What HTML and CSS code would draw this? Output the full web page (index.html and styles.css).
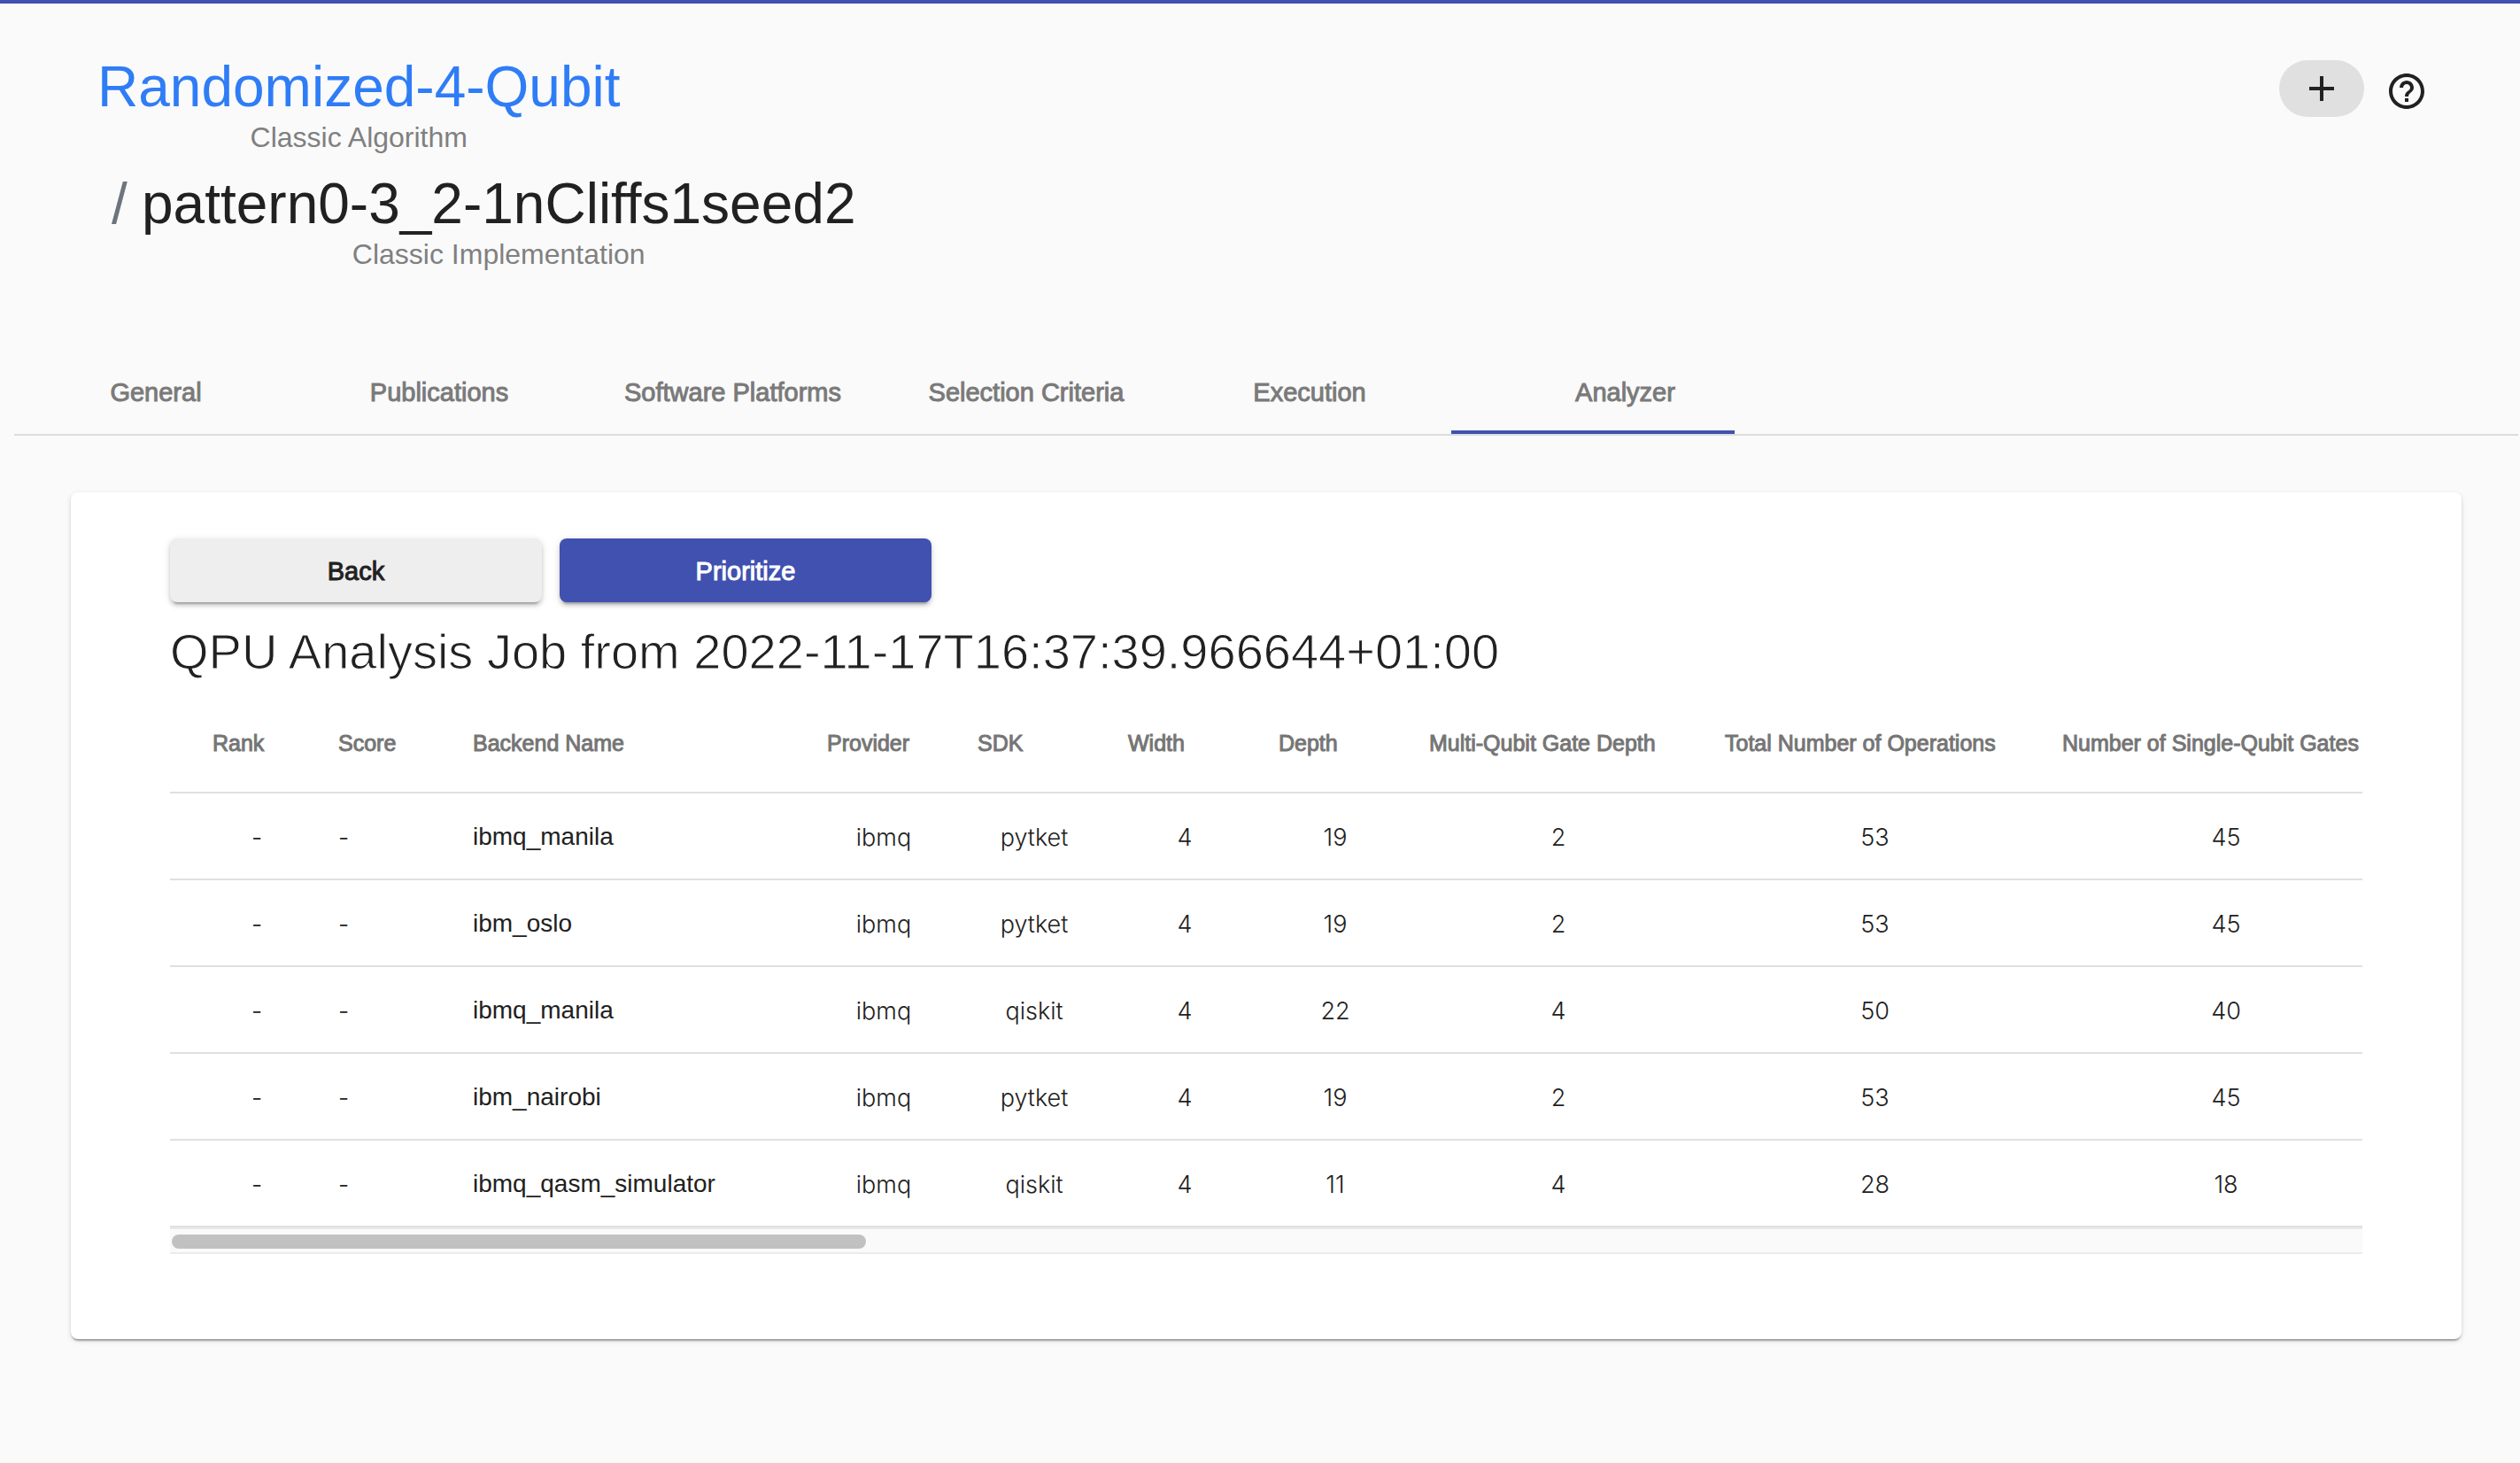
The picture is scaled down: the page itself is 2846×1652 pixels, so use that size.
FILE: index.html
```html
<!DOCTYPE html>
<html lang="en">
<head>
<meta charset="utf-8">
<title>pattern0-3_2-1nCliffs1seed2</title>
<link rel="stylesheet" href="styles.css">
</head>
<body>
<header class="page-header">
  <ol class="breadcrumb">
    <li class="crumb">
      <div class="crumb-body">
        <a class="crumb-title crumb-link" href="#">Randomized-4-Qubit</a>
        <span class="crumb-type">Classic Algorithm</span>
      </div>
    </li>
    <li class="crumb">
      <span class="crumb-separator">/</span>
      <div class="crumb-body">
        <span class="crumb-title">pattern0-3_2-1nCliffs1seed2</span>
        <span class="crumb-type">Classic Implementation</span>
      </div>
    </li>
  </ol>
  <div class="header-actions">
    <button class="add-button" type="button" aria-label="Add">
      <svg class="icon" viewBox="0 0 24 24"><path d="M19 13h-6v6h-2v-6H5v-2h6V5h2v6h6v2z"/></svg>
    </button>
    <button class="help-button" type="button" aria-label="Help">
      <svg class="icon" viewBox="0 0 24 24"><path d="M11 18h2v-2h-2v2zm1-16C6.48 2 2 6.480 2 12s4.480 10 10 10 10-4.480 10-10S17.520 2 12 2zm0 18c-4.410 0-8-3.590-8-8s3.590-8 8-8 8 3.590 8 8-3.590 8-8 8zm0-14c-2.210 0-4 1.790-4 4h2c0-1.100.9-2 2-2s2 .9 2 2c0 2-3 1.750-3 5h2c0-2.250 3-2.500 3-5 0-2.210-1.790-4-4-4z"/></svg>
    </button>
  </div>
</header>

<nav class="tabs">
  <a class="tab" href="#">General</a>
  <a class="tab" href="#">Publications</a>
  <a class="tab" href="#">Software Platforms</a>
  <a class="tab" href="#">Selection Criteria</a>
  <a class="tab" href="#">Execution</a>
  <a class="tab tab-active" href="#" aria-current="page">Analyzer</a>
</nav>

<main class="card">
  <div class="card-actions">
    <button class="button" type="button">Back</button>
    <button class="button button-primary" type="button">Prioritize</button>
  </div>
  <h1 class="card-title">QPU Analysis Job from 2022-11-17T16:37:39.966644+01:00</h1>
  <div class="table-scroll">
    <table class="results">
      <colgroup>
        <col class="col-rank"><col class="col-score"><col class="col-backend">
        <col class="col-short" span="4">
        <col class="col-multi"><col class="col-total"><col class="col-single">
      </colgroup>
      <thead>
        <tr><th>Rank</th><th>Score</th><th>Backend Name</th><th>Provider</th><th>SDK</th><th>Width</th><th>Depth</th><th>Multi-Qubit Gate Depth</th><th>Total Number of Operations</th><th>Number of Single-Qubit Gates</th></tr>
      </thead>
      <tbody>
        <tr><td>-</td><td class="score">-</td><td class="backend">ibmq_manila</td><td>ibmq</td><td>pytket</td><td>4</td><td>19</td><td>2</td><td>53</td><td>45</td></tr>
        <tr><td>-</td><td class="score">-</td><td class="backend">ibm_oslo</td><td>ibmq</td><td>pytket</td><td>4</td><td>19</td><td>2</td><td>53</td><td>45</td></tr>
        <tr><td>-</td><td class="score">-</td><td class="backend">ibmq_manila</td><td>ibmq</td><td>qiskit</td><td>4</td><td>22</td><td>4</td><td>50</td><td>40</td></tr>
        <tr><td>-</td><td class="score">-</td><td class="backend">ibm_nairobi</td><td>ibmq</td><td>pytket</td><td>4</td><td>19</td><td>2</td><td>53</td><td>45</td></tr>
        <tr><td>-</td><td class="score">-</td><td class="backend">ibmq_qasm_simulator</td><td>ibmq</td><td>qiskit</td><td>4</td><td>11</td><td>4</td><td>28</td><td>18</td></tr>
      </tbody>
    </table>
  </div>
  <div class="scroll-track"><div class="scroll-thumb"></div></div>
</main>
</body>
</html>
```

FILE: styles.css
```css
* {
  box-sizing: border-box;
}

body {
  min-height: 100vh;
  margin: 0;
  border-top: 4px solid #4051b0;
  background: #fafafa;
  color: #212121;
  font-family: "Liberation Sans", Arial, sans-serif;
  font-size: 28px;
}

/* Header */
.page-header {
  display: flex;
  justify-content: space-between;
  align-items: flex-start;
  padding: 56px 104px 0 110px;
}

.breadcrumb {
  margin: 0;
  padding: 0;
  list-style: none;
}

.crumb {
  display: flex;
}

.crumb-separator {
  width: 50px;
  padding-left: 16px;
  color: #6c757d;
  font-size: 64px;
  line-height: 76px;
}

.crumb-body {
  display: flex;
  flex-direction: column;
  align-items: center;
  height: 132px;
}

.crumb-title {
  font-size: 64px;
  line-height: 76px;
}

.crumb-link {
  color: #2f7df6;
  text-decoration: none;
}

.crumb-type {
  color: #808080;
  font-size: 32px;
  line-height: 38px;
}

.header-actions {
  display: flex;
  align-items: center;
  gap: 24px;
  padding-top: 8px;
}

.add-button,
.help-button {
  display: flex;
  justify-content: center;
  align-items: center;
  padding: 0;
  border: 0;
  background: none;
  color: inherit;
}

.add-button {
  width: 96px;
  height: 64px;
  border-radius: 32px;
  background: #e0e0e0;
}

.help-button {
  padding-top: 6px;
}

.icon {
  width: 48px;
  height: 48px;
  fill: currentColor;
}

/* Tabs */
.tabs {
  display: flex;
  margin: 70px 2px 0 16px;
  border-bottom: 2px solid #dcdcdc;
}

.tab {
  display: flex;
  justify-content: center;
  align-items: center;
  min-width: 320px;
  height: 96px;
  padding: 6px 49px 0;
  border-bottom: 4px solid transparent;
  color: #7a7a7a;
  font-size: 29px;
  text-decoration: none;
  -webkit-text-stroke: 1px;
}

.tab-active {
  padding-left: 122px;
  border-bottom-color: #4051b0;
}

/* Card */
.card {
  margin: 64px 66px 0 80px;
  padding: 52px 112px 96px;
  border-radius: 8px;
  background: #fff;
  box-shadow: 0 4px 2px -2px rgba(0, 0, 0, 0.2), 0 2px 2px rgba(0, 0, 0, 0.14), 0 2px 6px rgba(0, 0, 0, 0.12);
}

.card-actions {
  display: flex;
  gap: 20px;
}

.button {
  width: 420px;
  height: 72px;
  padding: 2px 0 0;
  border: 0;
  border-radius: 8px;
  background: #eee;
  box-shadow: 0 6px 2px -4px rgba(0, 0, 0, 0.2), 0 4px 4px rgba(0, 0, 0, 0.14), 0 2px 10px rgba(0, 0, 0, 0.12);
  color: #212121;
  font-family: inherit;
  font-size: 29px;
  -webkit-text-stroke: 1px;
}

.button-primary {
  background: #4051b0;
  color: #fff;
}

/* The outline in the card colour thins the strokes to a light weight */
.card-title {
  margin: 24px 0 16px;
  font-size: 56px;
  font-weight: 400;
  line-height: 64px;
  -webkit-text-stroke: 1px #fff;
}

/* Results table */
.table-scroll {
  overflow-x: auto;
  scrollbar-width: none;
}

.results {
  width: 2549px;
  border-collapse: separate;
  border-spacing: 0;
  table-layout: fixed;
}

.col-rank { width: 190px; }
.col-score { width: 152px; }
.col-backend { width: 400px; }
.col-short { width: 170px; }
.col-multi { width: 334px; }
.col-total { width: 381px; }
.col-single { width: 412px; }

.results th,
.results td {
  padding: 0 42px 0 0;
  border-bottom: 2px solid #e0e0e0;
  white-space: nowrap;
}

.results th {
  height: 112px;
  color: #757575;
  font-size: 25px;
  font-weight: 400;
  text-align: left;
  -webkit-text-stroke: 1px;
}

.results td {
  height: 98px;
  padding-top: 2px;
  font-family: Inter, "Liberation Sans", sans-serif;
  font-size: 27px;
  font-weight: 300;
  text-align: center;
}

.results th:first-child,
.results td:first-child {
  padding-left: 48px;
}

.results .score {
  text-align: left;
}

.results .backend {
  font-family: "Liberation Sans", Arial, sans-serif;
  font-size: 28px;
  font-weight: 400;
  text-align: left;
}

.scroll-track {
  height: 30px;
  padding: 6px 2px;
  border-top: 2px solid #e8e8e8;
  border-bottom: 2px solid #ebebeb;
  background: #fafafa;
}

.scroll-thumb {
  width: 784px;
  max-width: 32%;
  height: 16px;
  border-radius: 8px;
  background: #c1c1c1;
}
```
